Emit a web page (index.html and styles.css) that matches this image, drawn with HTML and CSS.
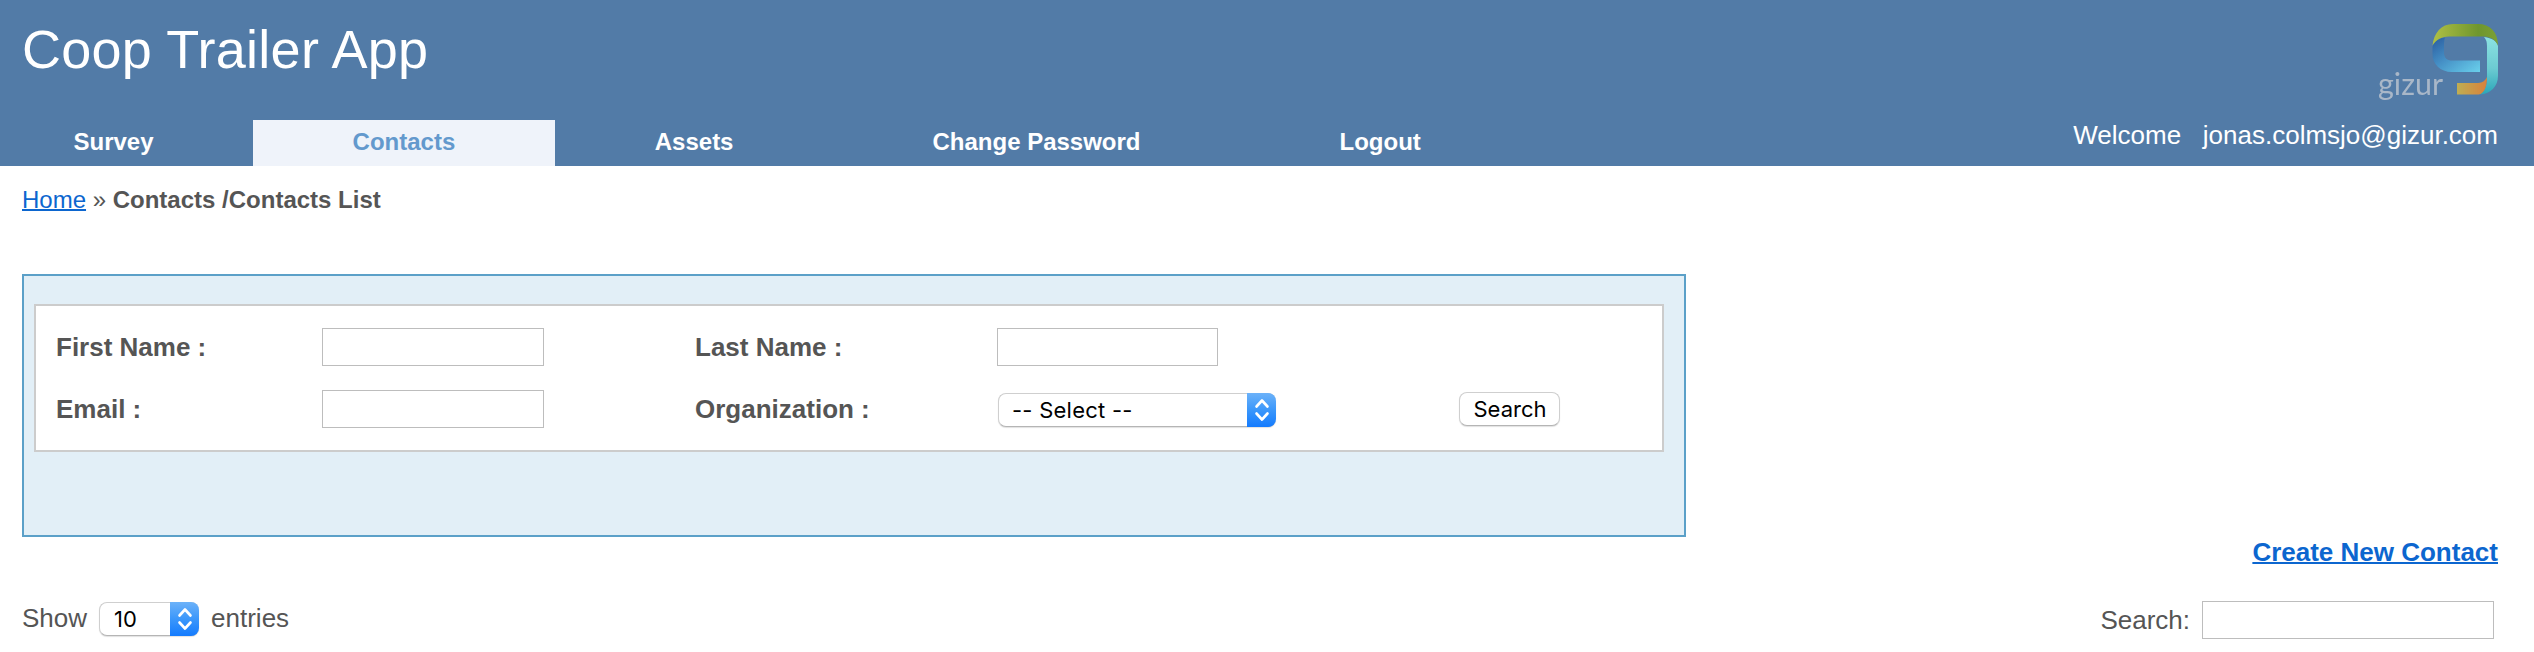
FILE: index.html
```html
<!DOCTYPE html>
<html lang="en">
<head>
<meta charset="utf-8">
<title>Coop Trailer App</title>
<link rel="stylesheet" href="styles.css">
</head>
<body>
<header class="header">
  <div class="header-left">
    <h1 class="title">Coop Trailer App</h1>
    <nav class="nav">
      <a class="tab tab-first">Survey</a>
      <a class="tab tab-active">Contacts</a>
      <a class="tab">Assets</a>
      <a class="tab">Change Password</a>
      <a class="tab">Logout</a>
    </nav>
  </div>
  <div class="header-right">
    <svg class="logo" width="122" height="80" viewBox="0 0 122 80">
      <defs>
        <linearGradient id="green"><stop offset="0" stop-color="#b0c044"/><stop offset=".7" stop-color="#6f962e"/><stop offset="1" stop-color="#7ba035"/></linearGradient>
        <linearGradient id="blue" x1="0" y1="0" x2="1" y2="1"><stop offset="0" stop-color="#2a5c9f"/><stop offset=".45" stop-color="#4590c6"/><stop offset="1" stop-color="#6ad0ec"/></linearGradient>
        <linearGradient id="teal" x1="0" y1="0" x2="0" y2="1"><stop offset="0" stop-color="#8ce2e2"/><stop offset=".55" stop-color="#6ccbd2"/><stop offset="1" stop-color="#2ba6b8"/></linearGradient>
        <linearGradient id="orange"><stop offset="0" stop-color="#bfae52"/><stop offset="1" stop-color="#d9813c"/></linearGradient>
      </defs>
      <text class="logo-text" x="0" y="71" textLength="65" lengthAdjust="spacingAndGlyphs">gizur</text>
      <path fill="url(#blue)" d="M55 21C57 17 61 14 67 13.500Q66 16 66 20V30Q67 36 73 36.500H102V48H74C62 48 54.500 40 54.500 30V23Z"/>
      <path fill="url(#teal)" d="M106 13C114 14 119 17 120 22V52C120 62 113 70 102 70.500C107 67 109 61 109 54V22Q109 16 106 13Z"/>
      <path fill="url(#orange)" d="M79 59H100Q107 58.500 109 53C109 61 107 69 101 70.500H79Z"/>
      <path fill="url(#green)" d="M54.500 21.500C56 9 63 0 75 0H100C112 0 120 8 120 21.500C117 15 112 12.500 104 12.500H71C63 12.500 58 16 54.500 21.500Z"/>
    </svg>
    <div class="welcome">Welcome&nbsp;&nbsp;&nbsp;jonas.colmsjo@gizur.com</div>
  </div>
</header>
<main class="content">
  <div class="breadcrumb"><a class="link">Home</a> » <b>Contacts /Contacts List</b></div>
  <section class="panel">
    <form class="filters">
      <label class="label">First Name :</label><input class="field" type="text">
      <label class="label">Last Name :</label><input class="field field-last" type="text">
      <span></span>
      <label class="label">Email :</label><input class="field" type="text">
      <label class="label">Organization :</label>
      <div class="select select-org"><span class="select-value">-- Select --</span><span class="stepper"><svg width="16" height="24" viewBox="0 0 16 24"><path class="chevron" d="M2.500 8.500L8 2.500L13.500 8.500M2.500 15.500L8 21.500L13.500 15.500"/></svg></span></div>
      <button class="button" type="button">Search</button>
    </form>
  </section>
  <div class="create"><a class="link">Create New Contact</a></div>
  <div class="table-bar">
    <div class="length">Show <div class="select select-length"><span class="select-value">10</span><span class="stepper"><svg width="16" height="24" viewBox="0 0 16 24"><path class="chevron" d="M2.500 8.500L8 2.500L13.500 8.500M2.500 15.500L8 21.500L13.500 15.500"/></svg></span></div> entries</div>
    <label class="search">Search: <input class="field field-search" type="text"></label>
  </div>
</main>
</body>
</html>
```
FILE: styles.css
```css
* { box-sizing: border-box; }
body {
  margin: 0;
  background: #fff;
  color: #555;
  font: 26px "Liberation Sans", Arial, sans-serif;
  overflow: hidden;
}
.header {
  display: flex;
  justify-content: space-between;
  height: 166px;
  background: #527ba7;
  color: #fff;
}
.title {
  margin: 0;
  height: 120px;
  padding-left: 22px;
  font-size: 54px;
  font-weight: normal;
  letter-spacing: 0.25px;
  line-height: 98px;
}
.nav { display: flex; }
.tab {
  height: 46px;
  padding: 0 99.5px;
  font-size: 24px;
  font-weight: bold;
  line-height: 43px;
}
.tab-first { padding: 0 99px 0 73.5px; }
.tab-active { padding: 0 100px; background: #eff3fa; color: #6399cd; }
.header-right {
  display: flex;
  flex-direction: column;
  align-items: flex-end;
  padding: 24px 36px 0 0;
}
.logo { display: block; margin-right: -2px; filter: blur(0.5px); }
.logo-text { font: 400 30px Lato, sans-serif; fill: #a9b7c8; }
.welcome { margin-top: 16px; line-height: 30px; }
.content { padding: 20px 36px 0 22px; }
.breadcrumb { font-size: 24px; line-height: 28px; }
.link {
  color: #0c66cf;
  text-decoration: underline;
  text-decoration-thickness: 2px;
}
.panel {
  width: 1664px;
  height: 263px;
  margin-top: 60px;
  padding: 28px 20px 0 10px;
  border: 2px solid #5ba0c8;
  background: #e2eff7;
}
.filters {
  display: grid;
  grid-template-columns: 266px 373px 302px 462px auto;
  grid-auto-rows: 38px;
  row-gap: 24px;
  height: 148px;
  padding: 22px 0 0 20px;
  border: 2px solid #ccc;
  background: #fff;
  justify-content: start;
}
.label { font-weight: bold; line-height: 38px; }
.field {
  width: 222px;
  height: 38px;
  border: 1px solid #bdbdbd;
  background: #fff;
  outline: 0;
}
.field-last { width: 221px; }
.select {
  display: flex;
  justify-content: space-between;
  height: 34px;
  border: 1px solid #cfcfcf;
  border-bottom-color: #b5b5b5;
  border-right: 0;
  border-radius: 8px;
  box-shadow: 0 1px 1px rgba(0, 0, 0, 0.12);
  background: #fff;
  color: #000;
  font: 22px Inter, sans-serif;
}
.select-org { width: 278px; margin: 3px 0 0 1px; }
.select-value { padding-left: 14px; line-height: 32px; }
.select-org .select-value { padding-left: 13px; letter-spacing: 0.25px; }
.stepper {
  display: flex;
  align-items: center;
  justify-content: center;
  width: 29px;
  margin: -1px 0;
  border-radius: 0 8px 8px 0;
  background: linear-gradient(#6cb2f9, #3b97fb 50%, #147bfe);
}
.chevron {
  fill: none;
  stroke: #fff;
  stroke-width: 2.6;
  stroke-linecap: round;
  stroke-linejoin: round;
}
.button {
  width: 101px;
  height: 34px;
  margin: 2px 0 0;
  padding: 0 0 0 1px;
  border: 1px solid #cfcfcf;
  border-bottom-color: #b5b5b5;
  border-radius: 8px;
  box-shadow: 0 1px 1px rgba(0, 0, 0, 0.12);
  background: #fff;
  color: #000;
  font: 22px Inter, sans-serif;
  line-height: 33px;
}
.create { font-weight: bold; line-height: 30px; text-align: right; }
.table-bar {
  display: flex;
  justify-content: space-between;
  margin-top: 34px;
  padding-right: 4px;
}
.length { display: flex; gap: 12px; height: 34px; line-height: 34px; }
.select-length { width: 100px; margin-top: 1px; }
.search { display: flex; gap: 12px; line-height: 38px; }
.field-search { width: 292px; }
```
